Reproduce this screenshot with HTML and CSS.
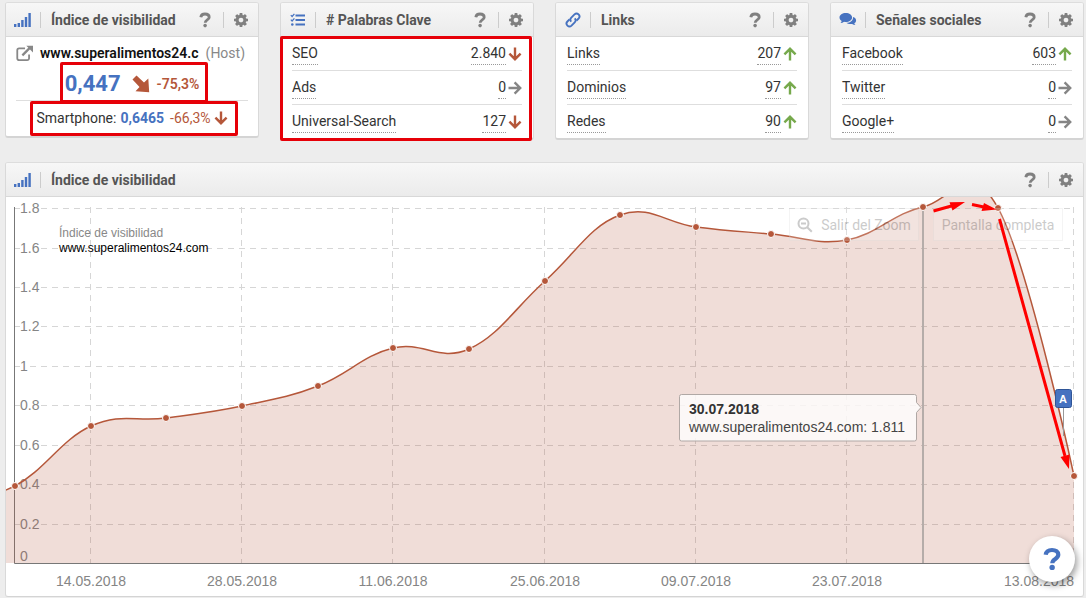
FILE: index.html
```
<!DOCTYPE html>
<html lang="es">
<head>
<meta charset="utf-8">
<title>Índice de visibilidad</title>
<link rel="stylesheet" href="styles.css">
</head>
<body>
<svg class="sprite" aria-hidden="true">
  <symbol id="bars" viewBox="0 0 18 16"><path d="M0 12h2.400v3H0zM3.600 11H6v4H3.600zM7.200 8h2.400v7H7.200zM10.800 5h2.400v10h-2.400zM14.400 1h2.400v14h-2.400z" fill="currentColor"/></symbol>
  <symbol id="help" viewBox="0 0 12 16"><path d="M1.800 5.200C2.100 3 3.800 2 6 2c2.500 0 4.200 1.200 4.200 3.200 0 2.900-4 2.600-4 5.600" fill="none" stroke="currentColor" stroke-width="2.800"/><circle cx="6.100" cy="13.600" r="1.800" fill="currentColor"/></symbol>
  <symbol id="cog" viewBox="128 128 1536 1536"><path fill="currentColor" d="M1152 896q0-106-75-181t-181-75-181 75-75 181 75 181 181 75 181-75 75-181zm512-109v222q0 12-8 23t-20 13l-185 28q-19 54-39 91 35 50 107 138 10 12 10 25t-9 23q-27 37-99 108t-94 71q-12 0-26-9l-138-108q-44 23-91 38-16 136-29 186-7 28-36 28h-222q-14 0-24.500-8.500t-11.500-21.500l-28-184q-49-16-90-37l-141 107q-10 9-25 9-14 0-25-11-126-114-165-168-7-10-7-23 0-12 8-23 15-21 51-66.500t54-70.500q-27-50-41-99l-183-27q-13-2-21-12.500t-8-23.500v-222q0-12 8-23t19-13l186-28q14-46 39-92-40-57-107-138-10-12-10-24 0-10 9-23 26-36 98.500-107.500t94.500-71.500q13 0 26 10l138 107q44-23 91-38 16-136 29-186 7-28 36-28h222q14 0 24.500 8.500t11.500 21.500l28 184q49 16 90 37l142-107q9-9 24-9 13 0 25 10 129 119 165 170 7 8 7 22 0 12-8 23-15 21-51 66.500t-54 70.500q26 50 41 98l183 28q13 2 21 12.500t8 23.500z"/></symbol>
  <symbol id="tasks" viewBox="0 0 16 16"><path d="M5.500 3.500H15M5.500 8H15M5.500 12.500H15" stroke="currentColor" stroke-width="1.800" fill="none"/><path d="M.8 3.200l1.300 1.300 2.300-2.700M.8 7.700L2.100 9l2.300-2.700" stroke="currentColor" stroke-width="1.200" fill="none"/><circle cx="2.300" cy="12.500" r="1.300" fill="currentColor"/></symbol>
  <symbol id="link" viewBox="0 0 16 16"><g fill="none" stroke="currentColor" stroke-width="1.900"><path d="M6.300 9.700a2.900 2.900 0 0 1 0-4.100l3.200-3.200a2.900 2.900 0 0 1 4.100 4.100L11.500 8.600"/><path d="M9.700 6.300a2.900 2.900 0 0 1 0 4.100l-3.200 3.200a2.900 2.900 0 0 1-4.100-4.100L4.500 7.400"/></g></symbol>
  <symbol id="chat" viewBox="0 0 17 16"><path d="M6.300 1c3.500 0 6.300 2 6.300 4.500S9.800 10 6.300 10c-.6 0-1.200-.1-1.700-.2C3.600 10.600 2.300 11 1 11c.6-.6 1-1.200 1.200-2C.8 8.200 0 6.900 0 5.500 0 3 2.800 1 6.300 1z" fill="currentColor"/><path d="M13.600 5c1.800.6 3 1.900 3 3.400 0 1.200-.7 2.200-1.800 2.900.2.700.6 1.200 1.200 1.700-1.300 0-2.500-.4-3.400-1.100-2.300.4-4.600-.1-5.800-1.100 3.700.1 6.900-2.200 6.800-5.800z" fill="currentColor"/></symbol>
  <symbol id="external" viewBox="0 0 16 16"><path d="M8.500 3.200H3A1.800 1.800 0 0 0 1.200 5v7.500a1.800 1.800 0 0 0 1.800 1.800h7.500a1.800 1.800 0 0 0 1.800-1.800V9" fill="none" stroke="currentColor" stroke-width="1.700"/><path d="M6 9.700L13 2.700" stroke="currentColor" stroke-width="2.200"/><path d="M9.700.8H16v6.200z" fill="currentColor"/></symbol>
  <symbol id="arrow" viewBox="0 0 14 14"><path d="M.5 7h11.500M6.600 1.400L12.200 7l-5.600 5.600" fill="none" stroke="currentColor" stroke-width="2.400"/></symbol>
  <symbol id="drop" viewBox="0 0 18 18"><path d="M4.500.5l7.500 7L16.300 3.500l.9 13.700-13.700-.9L7.500 12 .5 4.500z" fill="currentColor"/></symbol>
  <symbol id="zoomout" viewBox="0 0 16 16"><g fill="none" stroke="currentColor" stroke-width="2"><circle cx="6.500" cy="6.500" r="5"/><path d="M10.200 10.200l4.600 4.600M4 6.500h5"/></g></symbol>
</svg>

<main class="page">
  <section class="cards">
    <article class="card">
      <header class="head">
        <svg class="lead"><use href="#bars"/></svg>
        <h2>Índice de visibilidad</h2>
        <button class="tool help" aria-label="Ayuda"><svg><use href="#help"/></svg></button>
        <button class="tool cog" aria-label="Ajustes"><svg><use href="#cog"/></svg></button>
      </header>
      <div class="summary">
        <div class="host"><svg><use href="#external"/></svg><a href="#">www.superalimentos24.c</a><span>(Host)</span></div>
        <div class="score"><strong>0,447</strong><svg><use href="#drop"/></svg><b>-75,3%</b></div>
        <div class="mobile"><span>Smartphone:</span><strong>0,6465</strong><em>-66,3%</em><svg class="arrow down"><use href="#arrow"/></svg></div>
      </div>
      <i class="mark mark-score"></i>
      <i class="mark mark-mobile"></i>
    </article>

    <article class="card">
      <header class="head">
        <svg class="lead"><use href="#tasks"/></svg>
        <h2># Palabras Clave</h2>
        <button class="tool help" aria-label="Ayuda"><svg><use href="#help"/></svg></button>
        <button class="tool cog" aria-label="Ajustes"><svg><use href="#cog"/></svg></button>
      </header>
      <ul class="rows">
        <li><a href="#">SEO</a><a class="num" href="#">2.840</a><svg class="arrow down"><use href="#arrow"/></svg></li>
        <li><a href="#">Ads</a><a class="num" href="#">0</a><svg class="arrow"><use href="#arrow"/></svg></li>
        <li><a href="#">Universal-Search</a><a class="num" href="#">127</a><svg class="arrow down"><use href="#arrow"/></svg></li>
      </ul>
      <i class="mark mark-rows"></i>
    </article>

    <article class="card">
      <header class="head">
        <svg class="lead"><use href="#link"/></svg>
        <h2>Links</h2>
        <button class="tool help" aria-label="Ayuda"><svg><use href="#help"/></svg></button>
        <button class="tool cog" aria-label="Ajustes"><svg><use href="#cog"/></svg></button>
      </header>
      <ul class="rows">
        <li><a href="#">Links</a><a class="num" href="#">207</a><svg class="arrow up"><use href="#arrow"/></svg></li>
        <li><a href="#">Dominios</a><a class="num" href="#">97</a><svg class="arrow up"><use href="#arrow"/></svg></li>
        <li><a href="#">Redes</a><a class="num" href="#">90</a><svg class="arrow up"><use href="#arrow"/></svg></li>
      </ul>
    </article>

    <article class="card">
      <header class="head">
        <svg class="lead"><use href="#chat"/></svg>
        <h2>Señales sociales</h2>
        <button class="tool help" aria-label="Ayuda"><svg><use href="#help"/></svg></button>
        <button class="tool cog" aria-label="Ajustes"><svg><use href="#cog"/></svg></button>
      </header>
      <ul class="rows">
        <li><a href="#">Facebook</a><a class="num" href="#">603</a><svg class="arrow up"><use href="#arrow"/></svg></li>
        <li><a href="#">Twitter</a><a class="num" href="#">0</a><svg class="arrow"><use href="#arrow"/></svg></li>
        <li><a href="#">Google+</a><a class="num" href="#">0</a><svg class="arrow"><use href="#arrow"/></svg></li>
      </ul>
    </article>
  </section>

  <section class="card panel">
    <header class="head">
      <svg class="lead"><use href="#bars"/></svg>
      <h2>Índice de visibilidad</h2>
      <button class="tool help" aria-label="Ayuda"><svg><use href="#help"/></svg></button>
      <button class="tool cog" aria-label="Ajustes"><svg><use href="#cog"/></svg></button>
    </header>
    <div class="plot">
      <svg class="chart" viewBox="6 197 1077 399" role="img" aria-label="Índice de visibilidad">
        <g class="grid">
          <path d="M15 208.500h5M41 208.500H1074M15 248.500h5M41 248.500H1074M15 287.500h5M41 287.500H1074M15 326.500h5M41 326.500H1074M15 366.500h5M30 366.500H1074M15 405.500h5M41 405.500H1074M15 445.500h5M41 445.500H1074M15 484.500h5M41 484.500H1074M15 524.500h5M41 524.500H1074"/>
          <path d="M90.500 207V563M241.500 207V563M392.500 207V563M544.500 207V563M695.500 207V563M846.500 207V563M1073.500 207V563"/>
        </g>
        <path class="axis" d="M14.500 207V563.500H1074"/>
        <g class="label">
          <text x="20" y="213">1.8</text><text x="20" y="253">1.6</text><text x="20" y="292">1.4</text><text x="20" y="331">1.2</text><text x="20" y="371">1</text><text x="20" y="410">0.8</text><text x="20" y="450">0.6</text><text x="20" y="489">0.4</text><text x="20" y="529">0.2</text><text x="20" y="561">0</text>
        </g>
        <g class="label date">
          <text x="91" y="586">14.05.2018</text><text x="242" y="586">28.05.2018</text><text x="393" y="586">11.06.2018</text><text x="545" y="586">25.06.2018</text><text x="696" y="586">09.07.2018</text><text x="847" y="586">23.07.2018</text><text x="1039" y="586">13.08.2018</text>
        </g>
        <path class="area" d="M5 490.500L15 486C45 470 61 439.600 91 426S136 422 166 418S212 412.400 242 406S288 397.600 318 386S363 355.400 393 348S439 362.400 469 349S515 307.800 545 281S590 225.800 620 215S666 223.200 696 227S741 231.400 771 234S817 245.400 847 240S893 213.400 923 207S968 154 998 208C1028 262 1074 476 1074 476V563H5z"/>
        <path class="line" d="M5 490.500L15 486C45 470 61 439.600 91 426S136 422 166 418S212 412.400 242 406S288 397.600 318 386S363 355.400 393 348S439 362.400 469 349S515 307.800 545 281S590 225.800 620 215S666 223.200 696 227S741 231.400 771 234S817 245.400 847 240S893 213.400 923 207S968 154 998 208C1028 262 1074 476 1074 476"/>
        <path class="cursor" d="M923 207V563"/>
        <g class="dots">
          <circle cx="15" cy="486" r="3.500"/><circle cx="91" cy="426" r="3.500"/><circle cx="166" cy="418" r="3.500"/><circle cx="242" cy="406" r="3.500"/><circle cx="318" cy="386" r="3.500"/><circle cx="393" cy="348" r="3.500"/><circle cx="469" cy="349" r="3.500"/><circle cx="545" cy="281" r="3.500"/><circle cx="620" cy="215" r="3.500"/><circle cx="696" cy="227" r="3.500"/><circle cx="771" cy="234" r="3.500"/><circle cx="847" cy="240" r="3.500"/><circle cx="923" cy="207" r="3.500"/><circle cx="998" cy="208" r="3.500"/><circle cx="1074" cy="476" r="3.500"/>
        </g>
        <text class="legend" x="59" y="237">Índice de visibilidad</text>
        <text class="legend site" x="59" y="252">www.superalimentos24.com</text>
        <g class="pin"><path d="M1063.500 408V436"/><rect x="1055.500" y="389.500" width="16" height="18" rx="2"/><text x="1063" y="403">A</text></g>
        <g class="tip">
          <path d="M681.500 394.500H914.500a2 2 0 0 1 2 2V402.500L921 407.500L916.500 412.500V439a2 2 0 0 1-2 2H681.500a2 2 0 0 1-2-2V396.500a2 2 0 0 1 2-2z"/>
          <text class="day" x="689" y="414">30.07.2018</text>
          <text x="689" y="432">www.superalimentos24.com: 1.811</text>
        </g>
      </svg>
      <div class="actions">
        <button><svg><use href="#zoomout"/></svg>Salir del Zoom</button>
        <button>Pantalla completa</button>
      </div>
      <svg class="chart notes" viewBox="6 197 1077 399" aria-hidden="true">
        <path class="stroke" d="M933.500 211L954 205.200M972 204.500L985 207.200M999.500 219L1065 456"/>
        <path class="tips" d="M965 202L949.500 202.200 952.500 210.500zM996.500 209.500L984 203 981.500 211zM1069 469L1060.500 457 1069.500 454.500z"/>
      </svg>
    </div>
  </section>
</main>
<button class="fab" aria-label="Ayuda"><svg><use href="#help"/></svg></button>
</body>
</html>
```

FILE: styles.css
```
* { box-sizing: border-box; }
body { margin: 0; background: #ededed; color: #333; font: 14px/20px Roboto, "Liberation Sans", sans-serif; }
button { border: 0; padding: 0; background: none; font: inherit; color: inherit; cursor: pointer; }
a { color: inherit; text-decoration: none; }
.sprite { display: none; }

.page { padding: 2px 2px 0 5px; display: grid; gap: 22px; }
.cards { display: grid; grid-template-columns: repeat(4, 1fr); gap: 21px; align-items: start; }
.card { position: relative; background: #fff; border: 1px solid #d9d9d9; border-top-color: #ddd; border-bottom: 2px solid #d4d4d4; border-radius: 3px; }

.head { display: flex; align-items: center; height: 34px; padding: 0 10px 0 8px; border-bottom: 1px solid #d8d8d8; background: linear-gradient(#f7f7f7, #ebebeb); border-radius: 2px 2px 0 0; }
.lead { width: 18px; height: 16px; color: #4672c0; }
.head h2 { flex: 1; margin: 0 0 0 8px; padding-left: 10px; border-left: 1px solid #ccc; font-size: 14px; line-height: 16px; font-weight: 700; color: #555; }
.tool { display: flex; justify-content: center; color: #808080; }
.tool.help { width: 25px; margin-right: 6px; }
.help svg { width: 12px; height: 16px; }
.tool.cog { width: 25px; height: 16px; padding-left: 10px; align-items: center; border-left: 1px solid #ccc; }
.cog svg { width: 14px; height: 14px; flex: none; }

.rows { list-style: none; margin: 0; padding: 0 11px; }
.rows li { display: flex; align-items: center; height: 34px; border-bottom: 1px solid #dedede; }
.rows li:last-child { height: 33px; border-bottom: 0; }
.rows a { border-bottom: 1px dotted #999; line-height: 22px; }
.rows .num { margin-left: auto; }
.arrow { width: 14px; height: 14px; margin-left: 2px; color: #858585; }
.arrow.down { color: #b5573a; transform: rotate(90deg); }
.arrow.up { color: #76a94c; transform: rotate(-90deg); }

.summary { padding: 5px 10px 1px; }
.host { display: flex; align-items: center; height: 22px; color: #888; }
.host svg { width: 17px; height: 17px; margin-right: 7px; }
.host a { font-weight: 600; color: #111; }
.host span { margin-left: 7px; }
.score { display: flex; align-items: center; justify-content: center; height: 37px; padding-top: 4px; border-bottom: 1px solid #dedede; color: #b5573a; }
.score strong { font-size: 22px; color: #4672c0; }
.score svg { width: 18px; height: 18px; margin: 0 7px 0 11px; }
.score b { font-weight: 600; }
.mobile { display: flex; align-items: center; justify-content: center; height: 34px; }
.mobile strong { margin: 0 6px 0 4px; color: #4672c0; }
.mobile em { font-style: normal; color: #b5573a; }
.mobile .arrow { margin-left: 3px; }

.mark { position: absolute; border: 3px solid #e60008; border-radius: 2px; pointer-events: none; }
.mark-score { left: 54px; right: 50px; top: 59px; height: 41px; }
.mark-mobile { left: 24px; right: 20px; top: 98px; height: 35px; }
.mark-rows { left: -1px; right: 1px; top: 33px; bottom: -3px; }

.panel { border-bottom-width: 1px; }
.plot { position: relative; }
.chart { display: block; width: 100%; height: auto; }
.notes { position: absolute; inset: 0; pointer-events: none; }
.grid path { fill: none; stroke: #d6d6d6; stroke-dasharray: 6 5; }
.axis { fill: none; stroke: #777; }
.label { font: 14px "Liberation Sans", sans-serif; fill: #858585; }
.date { text-anchor: middle; }
.area { fill: #b5573a; fill-opacity: .2; }
.line { fill: none; stroke: #b5573a; stroke-width: 1.5; }
.cursor { stroke: #b5aca9; stroke-width: 2; }
.dots { fill: #b5573a; stroke: #fff; }
.legend { font: 12px "Liberation Sans", sans-serif; fill: #888; }
.site { fill: #000; }
.pin path { stroke: #999; }
.pin rect { fill: #4672c0; stroke: #2f5597; }
.pin text { fill: #fff; font: bold 11px "Liberation Sans", sans-serif; text-anchor: middle; }
.tip path { fill: #fff; fill-opacity: .8; stroke: #b0a8a5; }
.tip text { font: 14px "Liberation Sans", sans-serif; fill: #444; }
.tip .day { font-weight: 700; fill: #333; }
.stroke { fill: none; stroke: #f00; stroke-width: 3; }
.tips { fill: #f00; }

.actions { position: absolute; top: 11px; right: 20px; display: flex; gap: 14px; opacity: .3; }
.actions button { display: flex; align-items: center; justify-content: center; min-width: 130px; height: 33px; padding: 0 7px; color: #555; background: rgba(255, 255, 255, .6); border: 1px solid #ddd; }
.actions svg { width: 16px; height: 16px; margin-right: 8px; }

.fab { position: fixed; right: 11px; bottom: 16px; width: 46px; height: 46px; border-radius: 50%; background: #fff; box-shadow: 2px 3px 7px rgba(0, 0, 0, .4); color: #4672c0; display: flex; align-items: center; justify-content: center; }
.fab svg { width: 18px; height: 24px; }
```
